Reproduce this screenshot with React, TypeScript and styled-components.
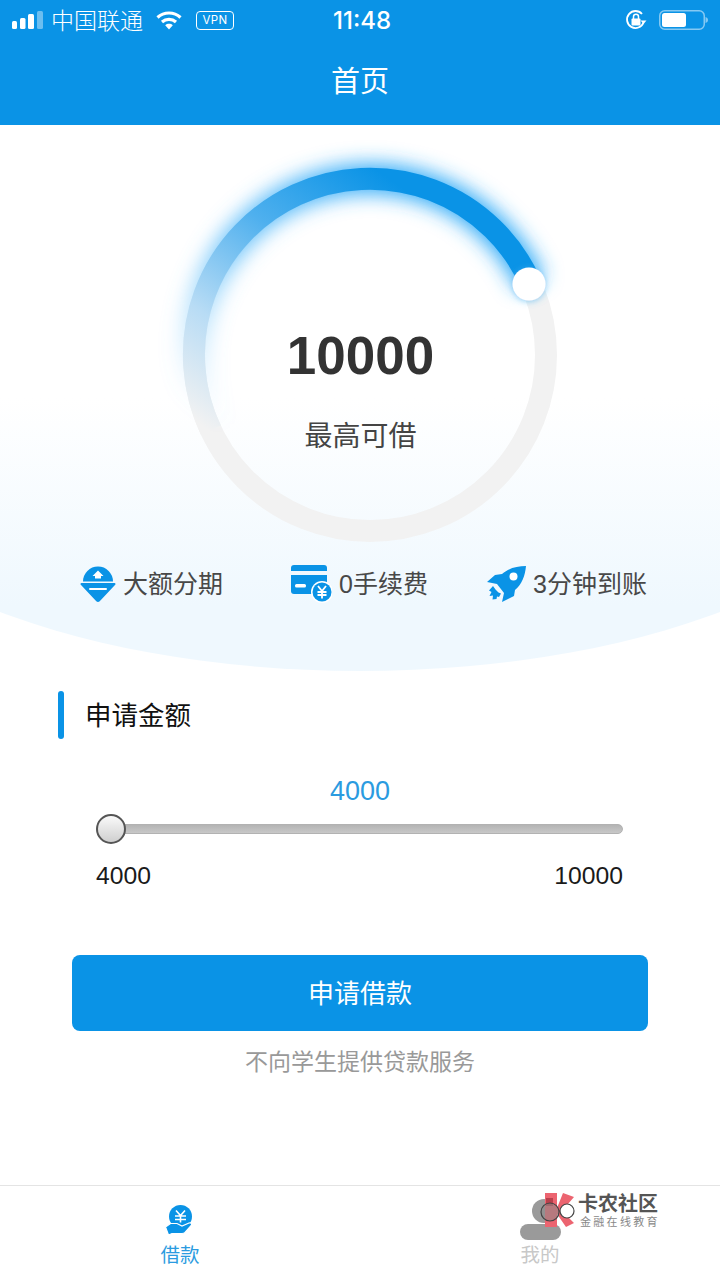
import React from 'react';
import styled, { createGlobalStyle } from 'styled-components';

const FONT = `"Liberation Sans", "Noto Sans CJK SC", sans-serif`;
const BLUE = '#0a93e6';

const GlobalStyle = createGlobalStyle`
  html, body {
    margin: 0;
    padding: 0;
    background: #fff;
  }
  body {
    font-family: ${FONT};
  }
`;

const Page = styled.div`
  width: 720px;
  height: 1280px;
  display: flex;
  flex-direction: column;
  overflow: hidden;
  position: relative;
  background: #fff;
`;

const Header = styled.header`
  background: ${BLUE};
  color: #fff;
  height: 125px;
  flex: none;
`;

const StatusBar = styled.div`
  height: 40px;
  display: grid;
  grid-template-columns: 333px auto 1fr;
  align-items: center;
`;

const StatusLeft = styled.div`
  display: flex;
  align-items: center;
  padding-left: 12px;
`;

const Carrier = styled.span`
  font-size: 23px;
  margin: 0 13px 2px 8px;
  font-weight: 300;
`;

const VpnBadge = styled.span`
  margin-left: 14px;
  width: 38px;
  height: 19px;
  box-sizing: border-box;
  border: 1.5px solid #fff;
  border-radius: 4px;
  font-family: "Inter", sans-serif;
  font-size: 11.5px;
  line-height: 16px;
  text-align: center;
  letter-spacing: 0.4px;
`;

const Clock = styled.span`
  font-family: "Inter", sans-serif;
  font-size: 24px;
  font-weight: 500;
`;

const StatusRight = styled.div`
  display: flex;
  align-items: center;
  justify-content: flex-end;
  gap: 12px;
  padding-right: 12px;
`;

const NavTitle = styled.h1`
  margin: 0;
  height: 85px;
  line-height: 84px;
  text-align: center;
  font-size: 29px;
  font-weight: 400;
`;

const Hero = styled.section`
  position: relative;
  height: 546px;
  flex: none;
  overflow: hidden;

  &::before {
    content: '';
    position: absolute;
    top: 0;
    bottom: 0;
    left: -190px;
    width: 1100px;
    border-radius: 0 0 50% 50% / 0 0 242px 242px;
    background: linear-gradient(180deg, #fff 50%, #eff8fe 88%);
  }
`;

const RingStack = styled.div`
  position: relative;
  display: grid;
  width: 374px;
  height: 374px;
  margin: 43px 0 0 183px;
`;

const RingSvg = styled.svg`
  grid-area: 1 / 1;
  overflow: visible;
`;

const RingCenter = styled.div`
  grid-area: 1 / 1;
  display: flex;
  flex-direction: column;
  align-items: center;
  padding: 158px 19px 0 0;
`;

const Amount = styled.div`
  font-size: 53px;
  line-height: 60px;
  font-weight: 700;
  color: #333;
`;

const AmountLabel = styled.div`
  margin-top: 31px;
  font-size: 28px;
  line-height: 40px;
  color: #444;
`;

const Features = styled.div`
  position: relative;
  display: grid;
  grid-template-columns: 211px 195px auto;
  margin-top: 23px;
  padding-left: 80px;
`;

const Feature = styled.div`
  display: flex;
  align-items: center;
  height: 38px;
  gap: 7px;
  font-size: 25px;
  color: #484848;
`;

const FeatureText = styled.span`
  margin-bottom: 4px;
`;

const SectionTitle = styled.div`
  display: flex;
  align-items: center;
  height: 48px;
  margin: 20px 0 0 58px;
  gap: 21px;
  font-size: 26.5px;
  color: #111;
`;

const TitleBar = styled.span`
  width: 6px;
  height: 48px;
  border-radius: 3px;
  background: ${BLUE};
`;

const TitleText = styled.span`
  margin-bottom: 4px;
`;

const SliderValue = styled.div`
  margin-top: 34px;
  height: 36px;
  line-height: 36px;
  text-align: center;
  font-size: 27px;
  color: #2b9be0;
`;

const SliderTrack = styled.div`
  position: relative;
  height: 40px;
  margin: 0 97px 0 96px;
  display: flex;
  align-items: center;
`;

const Rail = styled.div`
  width: 100%;
  height: 10px;
  box-sizing: border-box;
  border-radius: 5px;
  border: 1px solid #b2b2b2;
  background: linear-gradient(180deg, #b4b4b4, #c8c8c8);
`;

const Thumb = styled.div`
  position: absolute;
  left: 0;
  top: 5px;
  width: 30px;
  height: 30px;
  box-sizing: border-box;
  border-radius: 50%;
  border: 2px solid #555;
  background: linear-gradient(180deg, #fafafa, #cfcfcf);
`;

const SliderLabels = styled.div`
  display: flex;
  justify-content: space-between;
  margin: 10px 97px 0 96px;
  height: 34px;
  line-height: 34px;
  font-size: 24.7px;
  color: #1a1a1a;
`;

const ApplyButton = styled.button`
  display: block;
  width: 576px;
  height: 76px;
  margin: 62px 0 0 72px;
  padding: 0 0 4px;
  border: none;
  border-radius: 8px;
  background: ${BLUE};
  color: #fff;
  font-family: ${FONT};
  font-size: 26px;
`;

const Note = styled.p`
  margin: 15px 0 0;
  height: 32px;
  line-height: 32px;
  text-align: center;
  font-size: 23px;
  color: #999;
`;

const TabBar = styled.nav`
  margin-top: auto;
  height: 95px;
  flex: none;
  box-sizing: border-box;
  border-top: 1px solid #e4e4e4;
  display: grid;
  grid-template-columns: 1fr 1fr;
`;

const Tab = styled.div<{ $active?: boolean }>`
  display: flex;
  flex-direction: column;
  align-items: center;
  padding-top: 13px;
  font-size: 19.5px;
  line-height: 30px;
  color: ${(p) => (p.$active ? '#2b9be0' : '#c8c8c8')};
`;

const TabIconSlot = styled.div`
  height: 41px;
  display: flex;
  align-items: center;
`;

const Watermark = styled.div`
  position: absolute;
  left: 540px;
  top: 1192px;
  display: flex;
  gap: 2px;
`;

const WatermarkText = styled.div`
  display: flex;
  flex-direction: column;
`;

const WatermarkName = styled.span`
  font-size: 20px;
  line-height: 24px;
  font-weight: 700;
  color: #555;
`;

const WatermarkSub = styled.span`
  font-size: 11px;
  line-height: 13px;
  letter-spacing: 2.3px;
  margin-left: 2px;
  color: #888;
`;

const Signal = () => (
  <svg width="31" height="18" viewBox="0 0 31 18">
    <rect x="0" y="10" width="5" height="8" rx="1.5" fill="#fff" />
    <rect x="8" y="7" width="5.5" height="11" rx="1.5" fill="#fff" />
    <rect x="16" y="3" width="6" height="15" rx="1.5" fill="#fff" />
    <rect x="25" y="0" width="6" height="18" rx="1.5" fill="#fff" fillOpacity="0.4" />
  </svg>
);

const Wifi = () => (
  <svg width="26" height="20" viewBox="0 0 26 20" fill="none" stroke="#fff" strokeWidth="3.2">
    <path d="M1.5 7.5C8 1.5 18 1.5 24.5 7.5" />
    <path d="M6 12C10 8.5 16 8.5 20 12" />
    <path d="M13 19.5l-3.8-4.3c2.1-1.8 5.5-1.8 7.6 0z" fill="#fff" stroke="none" />
  </svg>
);

const RotationLock = () => (
  <svg width="22" height="22" viewBox="0 0 22 22" fill="none">
    <path d="M18.5 13.5A8.5 8.5 0 1 1 17 5" stroke="#fff" strokeWidth="1.8" />
    <path d="M15.5 11.5h6l-3 3.500z" fill="#fff" />
    <rect x="6.5" y="9.5" width="9" height="7" rx="1" fill="#fff" />
    <path d="M8.5 10V7.8a2.5 2.5 0 0 1 5 0V10" stroke="#fff" strokeWidth="1.5" />
  </svg>
);

const Battery = () => (
  <svg width="49" height="20" viewBox="0 0 49 20">
    <rect x="0.75" y="0.75" width="44.5" height="18.5" rx="5" fill="none" stroke="#fff" strokeOpacity="0.5" strokeWidth="1.5" />
    <rect x="3" y="3" width="24" height="14" rx="2.5" fill="#fff" />
    <path d="M46.5 7c1.5.4 2.5 1.5 2.5 3s-1 2.6-2.5 3z" fill="#fff" fillOpacity="0.5" />
  </svg>
);

// 环形进度：圆心 (187,187)，半径 176
const ARC = 'M27.8 262 A176 176 0 1 1 347.7 115.2';

const Ring = () => (
  <RingSvg width="374" height="374" viewBox="0 0 374 374">
    <defs>
      <linearGradient id="arcFill" gradientUnits="userSpaceOnUse" x1="25" y1="262" x2="205" y2="10">
        <stop offset="0" stopColor="#f2f2f2" />
        <stop offset="0.3" stopColor="#b8dcf5" />
        <stop offset="0.65" stopColor="#4fb0ee" />
        <stop offset="1" stopColor={BLUE} />
      </linearGradient>
      <linearGradient id="glowFill" gradientUnits="userSpaceOnUse" x1="15" y1="240" x2="205" y2="10">
        <stop offset="0" stopColor="#6cc4fa" stopOpacity="0" />
        <stop offset="0.5" stopColor="#5cbdfa" stopOpacity="0.85" />
        <stop offset="1" stopColor="#2faaf8" />
      </linearGradient>
      <filter id="ringGlow" x="-20%" y="-20%" width="140%" height="140%">
        <feGaussianBlur stdDeviation="10" />
      </filter>
      <filter id="knobShadow" x="-60%" y="-60%" width="220%" height="220%">
        <feDropShadow dx="0" dy="1" stdDeviation="3" floodColor="#4fb4f2" floodOpacity="0.6" />
      </filter>
    </defs>
    <circle cx="187" cy="187" r="176" fill="none" stroke="#f2f2f2" strokeWidth="22" />
    <path d={ARC} fill="none" stroke="url(#glowFill)" strokeWidth="30" filter="url(#ringGlow)" />
    <path d={ARC} fill="none" stroke="url(#arcFill)" strokeWidth="22" />
    <circle cx="346" cy="116" r="16.5" fill="#fff" filter="url(#knobShadow)" />
  </RingSvg>
);

const InstallmentIcon = () => (
  <svg width="36" height="38" viewBox="0 0 36 38">
    <path d="M3 16.5a15 15 0 1 1 30 0z" fill={BLUE} />
    <path d="M1.5 18h33c1 0 1.400 1.100.7 1.800L19.700 36.300c-.9.900-2.500.900-3.400 0L.8 19.800c-.7-.7-.3-1.800.7-1.800z" fill={BLUE} />
    <path d="M18 5.500l5.500 5.500H21v2.500h-6V11h-2.500z" fill="#fff" />
    <rect x="9" y="23" width="18" height="2" rx="1" fill="#fff" />
  </svg>
);

const CardIcon = () => (
  <svg width="41" height="38" viewBox="0 0 41 38">
    <path d="M3 0h30a3 3 0 0 1 3 3v3H0V3a3 3 0 0 1 3-3z" fill={BLUE} />
    <path d="M0 10h36v19H3a3 3 0 0 1-3-3z" fill={BLUE} />
    <rect x="4" y="19" width="11" height="3.5" rx="1.5" fill="#fff" />
    <circle cx="31" cy="27" r="11" fill="#fff" />
    <circle cx="31" cy="27" r="9.5" fill={BLUE} />
    <path d="M27 21l4 5 4-5M26.5 27h9M26.5 30h9M31 26v7.5" fill="none" stroke="#fff" strokeWidth="1.8" />
  </svg>
);

const RocketIcon = () => (
  <svg width="40" height="38" viewBox="0 0 40 38">
    <path d="M40 1C39 11 36 19 29 25L28 31 16 37 18 28 11 19 1 17 9 10 16 9C23 3 31 1 40 1z" fill={BLUE} />
    <circle cx="27.5" cy="11.5" r="4" fill="#fff" />
    <path d="M7 21l2.500 3.500 3 3 2.500 1-2 3.500-2-.5-.5 2.500-4 .5.5-4-3.500.5 2-4-2.500-1.500z" fill={BLUE} />
  </svg>
);

const LoanTabIcon = () => (
  <svg width="30" height="30" viewBox="0 0 30 30">
    <circle cx="15.5" cy="11.5" r="11.5" fill={BLUE} />
    <path d="M11 5.500l4.500 5 4.500-5M10 11h11M10 14.500h11M15.500 10.500v7" fill="none" stroke="#fff" strokeWidth="1.6" />
    <path
      d="M0.500 22l5-3.500h6.500l5 2.500 7-3c2-.8 3.500 1.200 2 2.600L20 27.500c-1 .8-2 1-3 1H7L3.500 30z"
      fill={BLUE}
      stroke="#fff"
      strokeWidth="1.2"
    />
  </svg>
);

const MineTabIcon = () => (
  <svg width="41" height="41" viewBox="0 0 41 41">
    <circle cx="24" cy="12" r="12" fill="#9a9a9a" />
    <rect x="0" y="25" width="41" height="16" rx="8" fill="#9a9a9a" />
  </svg>
);

const WatermarkLogo = () => (
  <svg width="36" height="36" viewBox="0 0 36 36">
    <path d="M5 1h12v34H5z" fill="#ec6470" />
    <path d="M17 16L23 1l11 4-12 14 12 12-8 4-9-13z" fill="#ec6470" />
    <rect x="6" y="6" width="7" height="8" fill="#b8404c" />
    <circle cx="10" cy="20" r="9" fill="#8a8a8a" fillOpacity="0.55" stroke="#444" strokeWidth="1.2" />
    <circle cx="27" cy="19" r="7" fill="#fff" stroke="#444" strokeWidth="1.2" />
    <path d="M19 19h1" stroke="#444" strokeWidth="1.2" />
  </svg>
);

const App: React.FC = () => {
  return (
    <Page>
      <GlobalStyle />
      <Header>
        <StatusBar>
          <StatusLeft>
            <Signal />
            <Carrier>中国联通</Carrier>
            <Wifi />
            <VpnBadge>VPN</VpnBadge>
          </StatusLeft>
          <Clock>11:48</Clock>
          <StatusRight>
            <RotationLock />
            <Battery />
          </StatusRight>
        </StatusBar>
        <NavTitle>首页</NavTitle>
      </Header>

      <Hero>
        <RingStack>
          <Ring />
          <RingCenter>
            <Amount>10000</Amount>
            <AmountLabel>最高可借</AmountLabel>
          </RingCenter>
        </RingStack>
        <Features>
          <Feature>
            <InstallmentIcon />
            <FeatureText>大额分期</FeatureText>
          </Feature>
          <Feature>
            <CardIcon />
            <FeatureText>0手续费</FeatureText>
          </Feature>
          <Feature>
            <RocketIcon />
            <FeatureText>3分钟到账</FeatureText>
          </Feature>
        </Features>
      </Hero>

      <SectionTitle>
        <TitleBar />
        <TitleText>申请金额</TitleText>
      </SectionTitle>
      <SliderValue>4000</SliderValue>
      <SliderTrack>
        <Rail />
        <Thumb />
      </SliderTrack>
      <SliderLabels>
        <span>4000</span>
        <span>10000</span>
      </SliderLabels>
      <ApplyButton>申请借款</ApplyButton>
      <Note>不向学生提供贷款服务</Note>

      <TabBar>
        <Tab $active>
          <TabIconSlot>
            <LoanTabIcon />
          </TabIconSlot>
          借款
        </Tab>
        <Tab>
          <TabIconSlot>
            <MineTabIcon />
          </TabIconSlot>
          我的
        </Tab>
      </TabBar>

      <Watermark>
        <WatermarkLogo />
        <WatermarkText>
          <WatermarkName>卡农社区</WatermarkName>
          <WatermarkSub>金融在线教育</WatermarkSub>
        </WatermarkText>
      </Watermark>
    </Page>
  );
};

export default App;
